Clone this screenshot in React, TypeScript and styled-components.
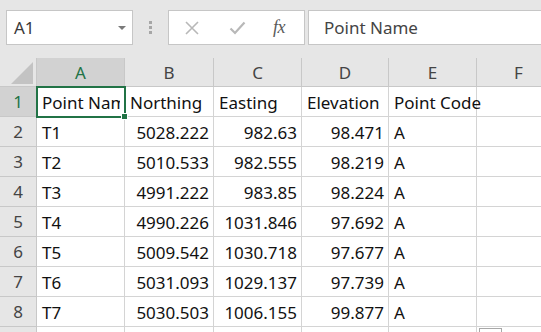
import { Fragment } from "react";
import styled, { createGlobalStyle } from "styled-components";

const GlobalStyle = createGlobalStyle`
  html, body {
    margin: 0;
    padding: 0;
    background: #e6e6e6;
    overflow: hidden;
  }
  body {
    font-family: "Noto Sans", "Noto Sans CJK JP", sans-serif;
  }
`;

const Page = styled.div`
  position: relative;
  width: 541px;
  height: 332px;
  overflow: hidden;
  background: #e6e6e6;
`;

const Toolbar = styled.div`
  display: flex;
  align-items: center;
  height: 35px;
  padding: 10px 0 0 6px;
  margin-bottom: 13px;
`;

const Box = styled.div`
  box-sizing: border-box;
  height: 35px;
  background: #fff;
  border: 1px solid #c6c6c6;
  display: flex;
  align-items: center;
`;

const NameBox = styled(Box)`
  width: 127px;
  padding: 0 7px 0 7px;
  justify-content: space-between;
  font-size: 17px;
  color: #3a3a3a;
`;

const Caret = styled.span`
  width: 0;
  height: 0;
  border-left: 4px solid transparent;
  border-right: 4px solid transparent;
  border-top: 4px solid #7a7a7a;
  margin-right: -1px;
`;

const Grip = styled.div`
  display: flex;
  flex-direction: column;
  gap: 2px;
  margin: 0 16px 0 16px;
  span {
    width: 3px;
    height: 3px;
    background: #a6a6a6;
  }
`;

const ButtonsBox = styled(Box)`
  width: 137px;
  padding-left: 15px;
`;

const IconSlot = styled.div<{ $w: number }>`
  width: ${(p) => p.$w}px;
  display: flex;
  align-items: center;
`;

const Fx = styled.span`
  font-family: "Liberation Serif", "DejaVu Serif", serif;
  font-style: italic;
  font-size: 18px;
  color: #5a5a5a;
  letter-spacing: -0.5px;
`;

const FormulaBox = styled(Box)`
  flex: 1;
  margin-left: 3px;
  margin-right: -10px;
  padding-left: 15px;
  font-size: 17px;
  color: #444;
`;

const Grid = styled.div`
  display: grid;
  grid-template-columns: 37px 88px 89px 88px 87px 88px 84px;
  grid-template-rows: 29px repeat(9, 30px);
`;

const Corner = styled.div`
  box-sizing: border-box;
  position: relative;
  border-right: 1px solid #c8c8c8;
  border-bottom: 1px solid #c8c8c8;
  &::after {
    content: "";
    position: absolute;
    right: 3px;
    bottom: 2px;
    width: 0;
    height: 0;
    border-left: 22px solid transparent;
    border-bottom: 22px solid #c3c3c3;
  }
`;

const Header = styled.div<{ $active?: boolean }>`
  box-sizing: border-box;
  display: flex;
  align-items: center;
  justify-content: center;
  font-size: 17px;
  color: ${(p) => (p.$active ? "#217346" : "#444")};
  background: ${(p) => (p.$active ? "#d2d2d2" : "#e6e6e6")};
  border-right: 1px solid #c8c8c8;
  border-bottom: 1px solid ${(p) => (p.$active ? "#217346" : "#c8c8c8")};
`;

const RowHeader = styled.div<{ $active?: boolean }>`
  box-sizing: border-box;
  display: flex;
  align-items: center;
  justify-content: center;
  font-size: 17px;
  color: ${(p) => (p.$active ? "#217346" : "#444")};
  background: ${(p) => (p.$active ? "#d2d2d2" : "#e6e6e6")};
  border-right: 1px solid ${(p) => (p.$active ? "#217346" : "#c8c8c8")};
  border-bottom: 1px solid #c8c8c8;
`;

const Cell = styled.div<{ $num?: boolean; $selected?: boolean; $spill?: boolean }>`
  box-sizing: border-box;
  position: relative;
  display: flex;
  align-items: center;
  justify-content: ${(p) => (p.$num ? "flex-end" : "flex-start")};
  padding: 1px 4px 0 5px;
  background: #fff;
  border-right: 1px solid #d4d4d4;
  border-bottom: 1px solid #d4d4d4;
  font-size: 17px;
  color: #111;
  white-space: nowrap;
  overflow: ${(p) => (p.$selected || p.$spill ? "visible" : "hidden")};
  z-index: ${(p) => (p.$selected ? 3 : p.$spill ? 2 : 1)};
`;

const Clip = styled.span`
  display: block;
  overflow: hidden;
  width: 100%;
`;

const Selection = styled.div`
  position: absolute;
  left: -1px;
  top: -1px;
  right: -2px;
  bottom: -2px;
  border: 2px solid #217346;
  pointer-events: none;
  &::after {
    content: "";
    position: absolute;
    right: -4px;
    bottom: -4px;
    width: 5px;
    height: 5px;
    background: #217346;
    border: 1px solid #fff;
  }
`;

const CornerTag = styled.div`
  position: absolute;
  left: 479px;
  top: 328px;
  width: 23px;
  height: 10px;
  box-sizing: border-box;
  border: 1px solid #a8a8a8;
  background: #fff;
  z-index: 5;
`;

const columns = ["A", "B", "C", "D", "E", "F"];

const data: [string, string, string, string, string][] = [
  ["T1", "5028.222", "982.63", "98.471", "A"],
  ["T2", "5010.533", "982.555", "98.219", "A"],
  ["T3", "4991.222", "983.85", "98.224", "A"],
  ["T4", "4990.226", "1031.846", "97.692", "A"],
  ["T5", "5009.542", "1030.718", "97.677", "A"],
  ["T6", "5031.093", "1029.137", "97.739", "A"],
  ["T7", "5030.503", "1006.155", "99.877", "A"],
];

const headers = ["Point Name", "Northing", "Easting", "Elevation", "Point Code"];

function CrossIcon() {
  return (
    <svg width="16" height="14" viewBox="0 0 16 14">
      <path d="M2 1 L14 13 M14 1 L2 13" stroke="#b8b8b8" strokeWidth="1.6" fill="none" />
    </svg>
  );
}

function CheckIcon() {
  return (
    <svg width="17" height="14" viewBox="0 0 17 14">
      <path d="M1.5 7.5 L6 12 L15.5 1.5" stroke="#b8b8b8" strokeWidth="2.2" fill="none" />
    </svg>
  );
}

export default function App() {
  return (
    <Page>
      <GlobalStyle />
      <Toolbar>
        <NameBox>
          <span>A1</span>
          <Caret />
        </NameBox>
        <Grip>
          <span />
          <span />
          <span />
        </Grip>
        <ButtonsBox>
          <IconSlot $w={45}>
            <CrossIcon />
          </IconSlot>
          <IconSlot $w={44}>
            <CheckIcon />
          </IconSlot>
          <IconSlot $w={20}>
            <Fx>fx</Fx>
          </IconSlot>
        </ButtonsBox>
        <FormulaBox>Point Name</FormulaBox>
      </Toolbar>

      <Grid>
        <Corner />
        {columns.map((c) => (
          <Header key={c} $active={c === "A"}>
            {c}
          </Header>
        ))}

        <RowHeader $active>1</RowHeader>
        <Cell $selected>
          <Clip>{headers[0]}</Clip>
          <Selection />
        </Cell>
        {headers.slice(1).map((h, j) => (
          <Cell key={h} $spill={j === 3}>
            {h}
          </Cell>
        ))}
        <Cell />

        {data.map((row, i) => (
          <Fragment key={i}>
            <RowHeader>{i + 2}</RowHeader>
            {row.map((v, j) => (
              <Cell key={j} $num={j > 0 && j < 4}>
                {v}
              </Cell>
            ))}
            <Cell />
          </Fragment>
        ))}

        <RowHeader />
        {columns.map((c) => (
          <Cell key={`9${c}`} />
        ))}
      </Grid>
      <CornerTag />
    </Page>
  );
}
